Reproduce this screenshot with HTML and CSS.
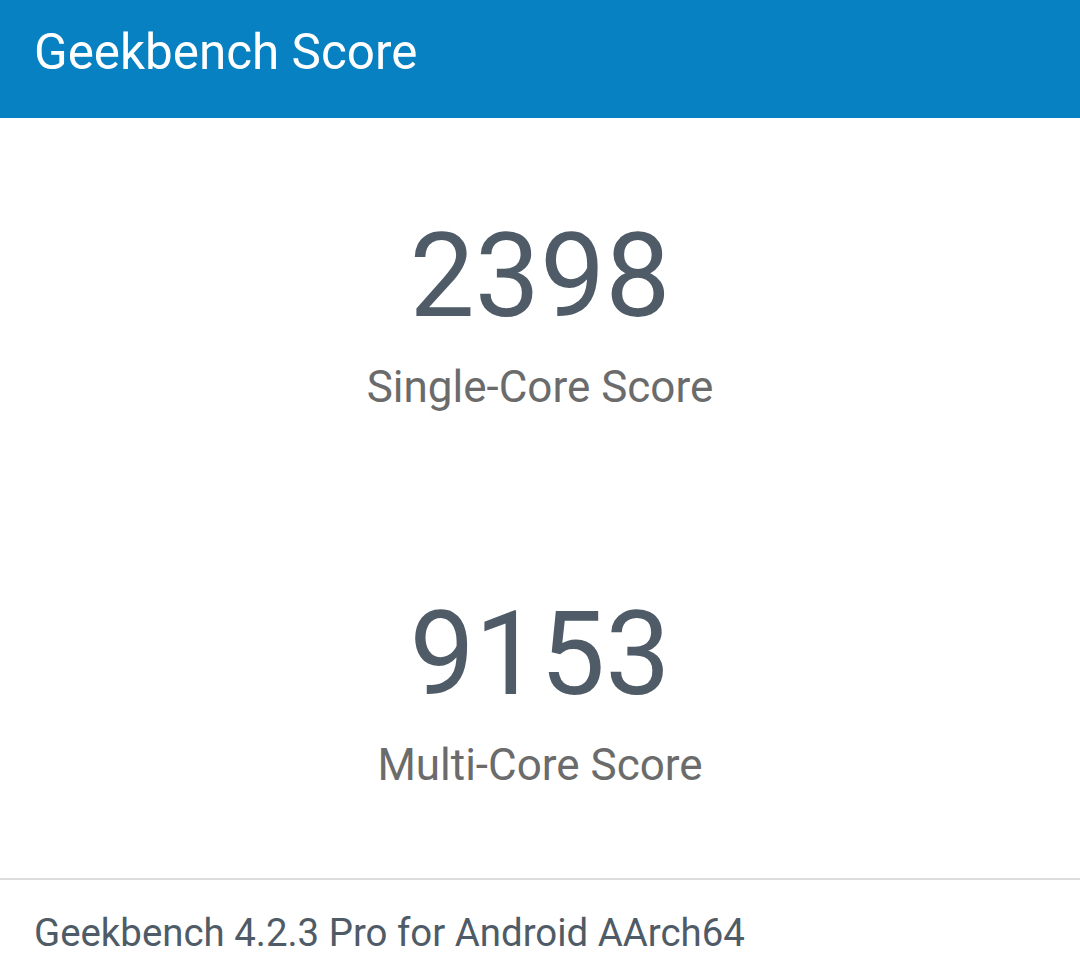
FILE: index.html
```html
<!DOCTYPE html>
<html lang="en">

<head>
  <meta charset="UTF-8">
  <meta name="viewport" content="width=device-width, initial-scale=1.0">
  <title>Geekbench Score</title>
  <link rel="stylesheet" href="styles.css">
</head>

<body>
  <div class="page">
    <div class="toolbar">
      <div class="title">Geekbench Score</div>
    </div>
    <div class="scores">
      <div class="score">
        <div class="value">2398</div>
        <div class="label">Single-Core Score</div>
      </div>
      <div class="score">
        <div class="value">9153</div>
        <div class="label">Multi-Core Score</div>
      </div>
    </div>
    <div class="footer">Geekbench 4.2.3 Pro for Android AArch64</div>
  </div>
</body>

</html>
```

FILE: styles.css
```css
body {
  margin: 0;
  background-color: #ffffff;
  font-family: Roboto, 'Noto Sans', sans-serif;
}

.page {
  width: 1080px;
  height: 978px;
  display: flex;
  flex-direction: column;
}

.toolbar {
  height: 118px;
  background-color: #0781c2;
  display: flex;
  align-items: center;
  padding-left: 34px;
  box-sizing: border-box;
}

.toolbar .title {
  color: #ffffff;
  font-size: 49.4px;
  margin-top: -14px;
}

.scores {
  height: 760px;
  display: flex;
  flex-direction: column;
  border-bottom: 2px solid #dcdcdc;
}

.score {
  height: 378px;
  text-align: center;
}

.score .value {
  color: #4f5b67;
  font-size: 116px;
  line-height: 1;
  padding-top: 100px;
}

.score .label {
  color: #6b6b6b;
  font-size: 44px;
  line-height: 1;
  padding-top: 31px;
}

.footer {
  color: #4f5b67;
  font-size: 38.4px;
  padding-left: 34px;
  padding-top: 30px;
}
```
